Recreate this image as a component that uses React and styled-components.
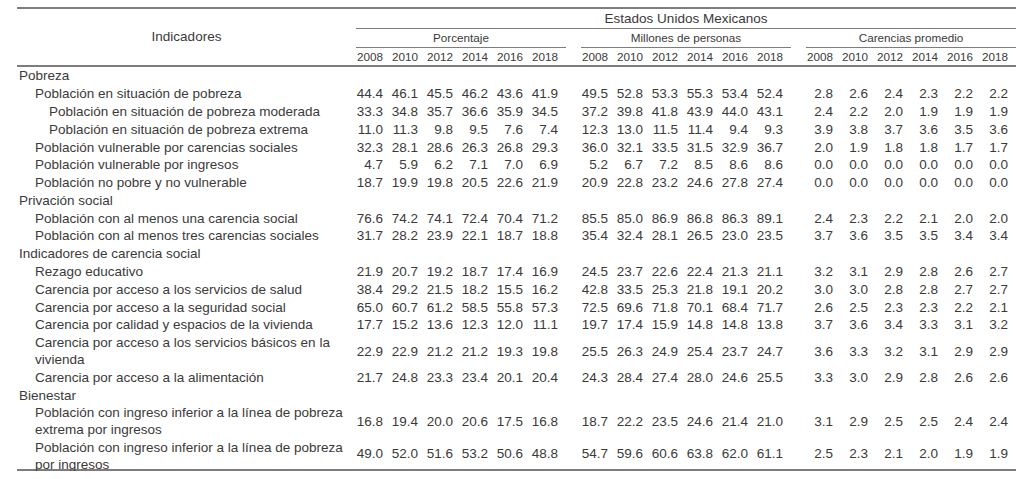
import React from "react";
import styled, { createGlobalStyle } from "styled-components";

const GlobalStyle = createGlobalStyle`
  html, body {
    margin: 0;
    padding: 0;
    background: #ffffff;
  }
  body {
    font-family: "Liberation Sans", Arial, sans-serif;
    color: #3a3a3a;
  }
`;

const YEARS = ["2008", "2010", "2012", "2014", "2016", "2018"];
const GROUPS = ["Porcentaje", "Millones de personas", "Carencias promedio"];

const rows = [
  { type: "section", label: "Pobreza" },
  {
    label: "Población en situación de pobreza",
    level: 1,
    values: [
      ["44.4", "46.1", "45.5", "46.2", "43.6", "41.9"],
      ["49.5", "52.8", "53.3", "55.3", "53.4", "52.4"],
      ["2.8", "2.6", "2.4", "2.3", "2.2", "2.2"],
    ],
  },
  {
    label: "Población en situación de pobreza moderada",
    level: 2,
    values: [
      ["33.3", "34.8", "35.7", "36.6", "35.9", "34.5"],
      ["37.2", "39.8", "41.8", "43.9", "44.0", "43.1"],
      ["2.4", "2.2", "2.0", "1.9", "1.9", "1.9"],
    ],
  },
  {
    label: "Población en situación de pobreza extrema",
    level: 2,
    values: [
      ["11.0", "11.3", "9.8", "9.5", "7.6", "7.4"],
      ["12.3", "13.0", "11.5", "11.4", "9.4", "9.3"],
      ["3.9", "3.8", "3.7", "3.6", "3.5", "3.6"],
    ],
  },
  {
    label: "Población vulnerable por carencias sociales",
    level: 1,
    values: [
      ["32.3", "28.1", "28.6", "26.3", "26.8", "29.3"],
      ["36.0", "32.1", "33.5", "31.5", "32.9", "36.7"],
      ["2.0", "1.9", "1.8", "1.8", "1.7", "1.7"],
    ],
  },
  {
    label: "Población vulnerable por ingresos",
    level: 1,
    values: [
      ["4.7", "5.9", "6.2", "7.1", "7.0", "6.9"],
      ["5.2", "6.7", "7.2", "8.5", "8.6", "8.6"],
      ["0.0", "0.0", "0.0", "0.0", "0.0", "0.0"],
    ],
  },
  {
    label: "Población no pobre y no vulnerable",
    level: 1,
    values: [
      ["18.7", "19.9", "19.8", "20.5", "22.6", "21.9"],
      ["20.9", "22.8", "23.2", "24.6", "27.8", "27.4"],
      ["0.0", "0.0", "0.0", "0.0", "0.0", "0.0"],
    ],
  },
  { type: "section", label: "Privación social" },
  {
    label: "Población con al menos una carencia social",
    level: 1,
    values: [
      ["76.6", "74.2", "74.1", "72.4", "70.4", "71.2"],
      ["85.5", "85.0", "86.9", "86.8", "86.3", "89.1"],
      ["2.4", "2.3", "2.2", "2.1", "2.0", "2.0"],
    ],
  },
  {
    label: "Población con al menos tres carencias sociales",
    level: 1,
    values: [
      ["31.7", "28.2", "23.9", "22.1", "18.7", "18.8"],
      ["35.4", "32.4", "28.1", "26.5", "23.0", "23.5"],
      ["3.7", "3.6", "3.5", "3.5", "3.4", "3.4"],
    ],
  },
  { type: "section", label: "Indicadores de carencia social" },
  {
    label: "Rezago educativo",
    level: 1,
    values: [
      ["21.9", "20.7", "19.2", "18.7", "17.4", "16.9"],
      ["24.5", "23.7", "22.6", "22.4", "21.3", "21.1"],
      ["3.2", "3.1", "2.9", "2.8", "2.6", "2.7"],
    ],
  },
  {
    label: "Carencia por acceso a los servicios de salud",
    level: 1,
    values: [
      ["38.4", "29.2", "21.5", "18.2", "15.5", "16.2"],
      ["42.8", "33.5", "25.3", "21.8", "19.1", "20.2"],
      ["3.0", "3.0", "2.8", "2.8", "2.7", "2.7"],
    ],
  },
  {
    label: "Carencia por acceso a la seguridad social",
    level: 1,
    values: [
      ["65.0", "60.7", "61.2", "58.5", "55.8", "57.3"],
      ["72.5", "69.6", "71.8", "70.1", "68.4", "71.7"],
      ["2.6", "2.5", "2.3", "2.3", "2.2", "2.1"],
    ],
  },
  {
    label: "Carencia por calidad y espacios de la vivienda",
    level: 1,
    values: [
      ["17.7", "15.2", "13.6", "12.3", "12.0", "11.1"],
      ["19.7", "17.4", "15.9", "14.8", "14.8", "13.8"],
      ["3.7", "3.6", "3.4", "3.3", "3.1", "3.2"],
    ],
  },
  {
    label: "Carencia por acceso a los servicios básicos en la vivienda",
    level: 1,
    values: [
      ["22.9", "22.9", "21.2", "21.2", "19.3", "19.8"],
      ["25.5", "26.3", "24.9", "25.4", "23.7", "24.7"],
      ["3.6", "3.3", "3.2", "3.1", "2.9", "2.9"],
    ],
  },
  {
    label: "Carencia por acceso a la alimentación",
    level: 1,
    values: [
      ["21.7", "24.8", "23.3", "23.4", "20.1", "20.4"],
      ["24.3", "28.4", "27.4", "28.0", "24.6", "25.5"],
      ["3.3", "3.0", "2.9", "2.8", "2.6", "2.6"],
    ],
  },
  { type: "section", label: "Bienestar" },
  {
    label: "Población con ingreso inferior a la línea de pobreza extrema por ingresos",
    level: 1,
    values: [
      ["16.8", "19.4", "20.0", "20.6", "17.5", "16.8"],
      ["18.7", "22.2", "23.5", "24.6", "21.4", "21.0"],
      ["3.1", "2.9", "2.5", "2.5", "2.4", "2.4"],
    ],
  },
  {
    label: "Población con ingreso inferior a la línea de pobreza por ingresos",
    level: 1,
    tight: true,
    values: [
      ["49.0", "52.0", "51.6", "53.2", "50.6", "48.8"],
      ["54.7", "59.6", "60.6", "63.8", "62.0", "61.1"],
      ["2.5", "2.3", "2.1", "2.0", "1.9", "1.9"],
    ],
  },
];

const App = () => {
  return (
    <Page>
      <GlobalStyle />
      <Table>
        <colgroup>
          <Col $w={339} />
          {GROUPS.map((g, gi) => (
            <React.Fragment key={g}>
              {gi > 0 && <Col $w={15} />}
              {YEARS.map((y) => (
                <Col key={y} $w={35} />
              ))}
            </React.Fragment>
          ))}
        </colgroup>
        <thead>
          <tr>
            <IndicatorHead rowSpan={3}>Indicadores</IndicatorHead>
            <TitleHead colSpan={20}>Estados Unidos Mexicanos</TitleHead>
          </tr>
          <tr>
            {GROUPS.map((g, gi) => (
              <React.Fragment key={g}>
                {gi > 0 && <GapHead />}
                <GroupHead colSpan={6}>{g}</GroupHead>
              </React.Fragment>
            ))}
          </tr>
          <tr>
            {GROUPS.map((g, gi) => (
              <React.Fragment key={g}>
                {gi > 0 && <YearHead />}
                {YEARS.map((y) => (
                  <YearHead key={y}>{y}</YearHead>
                ))}
              </React.Fragment>
            ))}
          </tr>
        </thead>
        <tbody>
          {rows.map((row) =>
            row.type === "section" ? (
              <tr key={row.label}>
                <Label $level={0}>{row.label}</Label>
                <td colSpan={20} />
              </tr>
            ) : (
              <tr key={row.label}>
                <Label $level={row.level}>
                  <LabelText $tight={row.tight}>{row.label}</LabelText>
                </Label>
                {row.values.map((set, gi) => (
                  <React.Fragment key={gi}>
                    {gi > 0 && <td />}
                    {set.map((v, i) => (
                      <Value key={i}>{v}</Value>
                    ))}
                  </React.Fragment>
                ))}
              </tr>
            )
          )}
        </tbody>
      </Table>
    </Page>
  );
};

export default App;

const Page = styled.div`
  padding: 7px 8px 0 17px;
`;

const Table = styled.table`
  width: 999px;
  table-layout: fixed;
  border-collapse: separate;
  border-spacing: 0;
  border-top: 2px solid #7d7d7d;
  border-bottom: 2px solid #7d7d7d;
  font-size: 13.5px;
  color: #3a3a3a;

  td,
  th {
    padding: 0;
  }
`;

const Col = styled.col`
  width: ${(props) => props.$w}px;
`;

const IndicatorHead = styled.th`
  font-weight: normal;
  font-size: 13.5px;
  text-align: center;
  vertical-align: middle;
  border-bottom: 2px solid #7d7d7d;
  padding-bottom: 2px !important;
`;

const TitleHead = styled.th`
  font-weight: normal;
  font-size: 13.5px;
  text-align: center;
  height: 19px;
  line-height: 19px;
  border-bottom: 1px solid #7d7d7d;
`;

const GroupHead = styled.th`
  font-weight: normal;
  font-size: 11.7px;
  text-align: center;
  height: 18px;
  line-height: 18px;
  border-bottom: 1px solid #7d7d7d;
`;

const GapHead = styled.th``;

const YearHead = styled.th`
  font-weight: normal;
  font-size: 11.7px;
  text-align: right;
  height: 17px;
  line-height: 17px;
  padding-right: 8px !important;
  border-bottom: 2px solid #7d7d7d;
`;

const Label = styled.td`
  padding: 0.4px 8px 0.4px ${(props) => 2 + props.$level * 16 - (props.$level > 1 ? 2 : 0)}px !important;
  line-height: 17px;
  vertical-align: top;
`;

const LabelText = styled.div`
  height: ${(props) => (props.$tight ? "29px" : "auto")};
`;

const Value = styled.td`
  text-align: right;
  padding-right: 8px !important;
  line-height: 17px;
  vertical-align: middle;
`;
